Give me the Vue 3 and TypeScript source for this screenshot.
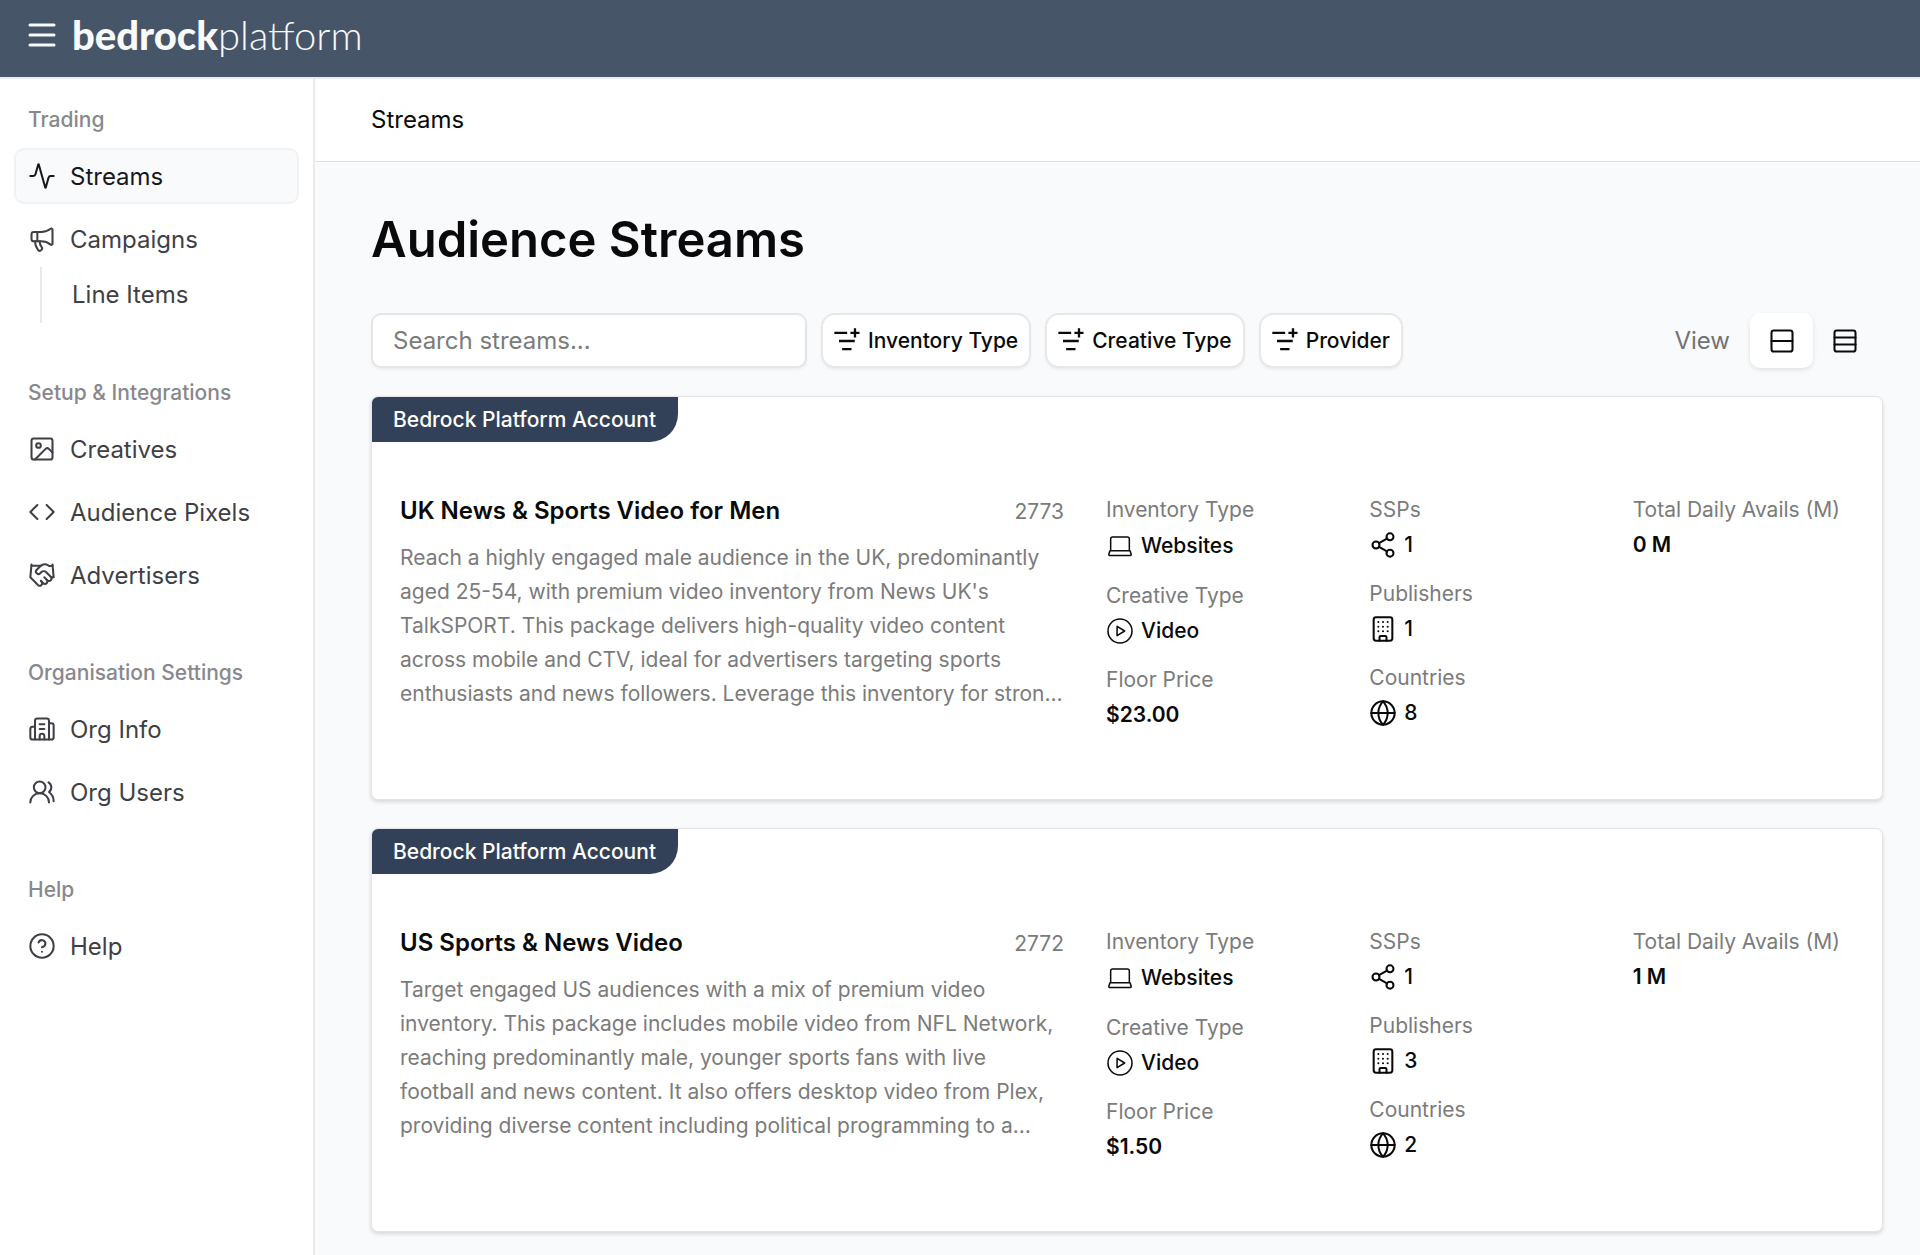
<script setup lang="ts">
import { ref } from 'vue'

interface NavItem {
  label: string
  icon: string
  active?: boolean
  children?: string[]
}
interface NavGroup {
  title: string
  items: NavItem[]
}
interface Metric {
  label: string
  value: string
  icon?: string
}
interface Stream {
  id: number
  account: string
  name: string
  description: string
  columns: Metric[][]
}

const icons: Record<string, string> = {
  activity:
    '<path d="M22 12h-2.48a2 2 0 0 0-1.93 1.46l-2.35 8.36a.25.25 0 0 1-.48 0L9.24 2.18a.25.25 0 0 0-.48 0l-2.35 8.36A2 2 0 0 1 4.49 12H2"/>',
  megaphone:
    '<path d="M11 6a13 13 0 0 0 8.4-2.8A1 1 0 0 1 21 4v12a1 1 0 0 1-1.6.8A13 13 0 0 0 11 14H5a2 2 0 0 1-2-2V8a2 2 0 0 1 2-2z"/><path d="M6 14a12 12 0 0 0 2.4 7.2 2 2 0 0 0 3.2-2.4A8 8 0 0 1 10 14"/><path d="M8 6v8"/>',
  image:
    '<rect width="18" height="18" x="3" y="3" rx="2"/><circle cx="9" cy="9" r="2"/><path d="m21 15-3.09-3.09a2 2 0 0 0-2.82 0L6 21"/>',
  code: '<path d="m16 18 6-6-6-6"/><path d="m8 6-6 6 6 6"/>',
  handshake:
    '<path d="m11 17 2 2a1 1 0 1 0 3-3"/><path d="m14 14 2.5 2.5a1 1 0 1 0 3-3l-3.88-3.88a3 3 0 0 0-4.24 0l-.88.88a1 1 0 1 1-3-3l2.81-2.81a5.79 5.79 0 0 1 7.06-.87l.47.28a2 2 0 0 0 1.42.25L21 4"/><path d="m21 3 1 11h-2"/><path d="M3 3 2 14l6.5 6.5a1 1 0 1 0 3-3"/><path d="M3 4h8"/>',
  office:
    '<path d="M10 12h4"/><path d="M10 8h4"/><path d="M14 21v-3a2 2 0 0 0-4 0v3"/><path d="M6 10H4a2 2 0 0 0-2 2v7a2 2 0 0 0 2 2h16a2 2 0 0 0 2-2V9a2 2 0 0 0-2-2h-2"/><path d="M6 21V5a2 2 0 0 1 2-2h8a2 2 0 0 1 2 2v16"/>',
  users:
    '<path d="M18 21a8 8 0 0 0-16 0"/><circle cx="10" cy="8" r="5"/><path d="M22 20c0-3.37-2-6.5-4-8a5 5 0 0 0-.45-8.3"/>',
  help: '<circle cx="12" cy="12" r="10"/><path d="M9.09 9a3 3 0 0 1 5.83 1c0 2-3 3-3 3"/><path d="M12 17h.01"/>',
  filter:
    '<path stroke-linecap="butt" d="M2 5h11M6 12h13.5M8.7 19h8M15.8 5h7.8M19.7 1v8"/>',
  rows2: '<rect width="18" height="18" x="3" y="3" rx="2"/><path d="M3 12h18"/>',
  rows3: '<rect width="18" height="18" x="3" y="3" rx="2"/><path d="M21 9H3"/><path d="M21 15H3"/>',
  laptop:
    '<path stroke-width="1.3" d="M4 16V6a1.8 1.8 0 0 1 1.8-1.8h12.4A1.8 1.8 0 0 1 20 6v10M3.4 16h17.2l1 3a1 1 0 0 1-1 1.2H3.4a1 1 0 0 1-1-1.2z"/>',
  play: '<g stroke-width="1.3"><circle cx="12" cy="12" r="10.3"/><path d="M9.5 8v8l6.5-4z"/></g>',
  share:
    '<circle cx="18" cy="5" r="3"/><circle cx="6" cy="12" r="3"/><circle cx="18" cy="19" r="3"/><path d="m8.59 13.51 6.83 3.98"/><path d="m15.41 6.51-6.82 3.98"/>',
  building:
    '<rect width="16" height="20" x="4" y="2" rx="2"/><path d="M9 22v-3a1 1 0 0 1 1-1h4a1 1 0 0 1 1 1v3"/><path d="M8 6h.01M12 6h.01M16 6h.01M8 10h.01M12 10h.01M16 10h.01M8 14h.01M12 14h.01M16 14h.01"/>',
  globe:
    '<circle cx="12" cy="12" r="10"/><path d="M12 2a14.5 14.5 0 0 0 0 20 14.5 14.5 0 0 0 0-20"/><path d="M2 12h20"/>',
}

const groups: NavGroup[] = [
  {
    title: 'Trading',
    items: [
      { label: 'Streams', icon: 'activity', active: true },
      { label: 'Campaigns', icon: 'megaphone', children: ['Line Items'] },
    ],
  },
  {
    title: 'Setup & Integrations',
    items: [
      { label: 'Creatives', icon: 'image' },
      { label: 'Audience Pixels', icon: 'code' },
      { label: 'Advertisers', icon: 'handshake' },
    ],
  },
  {
    title: 'Organisation Settings',
    items: [
      { label: 'Org Info', icon: 'office' },
      { label: 'Org Users', icon: 'users' },
    ],
  },
  { title: 'Help', items: [{ label: 'Help', icon: 'help' }] },
]

const filters = ['Inventory Type', 'Creative Type', 'Provider']

function metrics(price: string, ssps: string, publishers: string, countries: string, avails: string): Metric[][] {
  return [
    [
      { label: 'Inventory Type', value: 'Websites', icon: 'laptop' },
      { label: 'Creative Type', value: 'Video', icon: 'play' },
      { label: 'Floor Price', value: price },
    ],
    [
      { label: 'SSPs', value: ssps, icon: 'share' },
      { label: 'Publishers', value: publishers, icon: 'building' },
      { label: 'Countries', value: countries, icon: 'globe' },
    ],
    [{ label: 'Total Daily Avails (M)', value: avails }],
  ]
}

const streams: Stream[] = [
  {
    id: 2773,
    account: 'Bedrock Platform Account',
    name: 'UK News & Sports Video for Men',
    description:
      "Reach a highly engaged male audience in the UK, predominantly aged 25-54, with premium video inventory from News UK's TalkSPORT. This package delivers high-quality video content across mobile and CTV, ideal for advertisers targeting sports enthusiasts and news followers. Leverage this inventory for stron…",
    columns: metrics('$23.00', '1', '1', '8', '0 M'),
  },
  {
    id: 2772,
    account: 'Bedrock Platform Account',
    name: 'US Sports & News Video',
    description:
      'Target engaged US audiences with a mix of premium video inventory. This package includes mobile video from NFL Network, reaching predominantly male, younger sports fans with live football and news content. It also offers desktop video from Plex, providing diverse content including political programming to a…',
    columns: metrics('$1.50', '1', '3', '2', '1 M'),
  },
]

const search = ref('')
const view = ref<'cards' | 'rows'>('cards')
</script>

<template>
  <div class="app">
    <header class="topbar">
      <button class="menu" type="button" aria-label="Toggle menu">
        <svg viewBox="0 0 28 28" class="menu-icon"><path d="M2 4h24M2 14h24M2 24h24" /></svg>
      </button>
      <a class="brand" href="#"><b>bedrock</b><span>platform</span></a>
    </header>

    <div class="shell">
      <nav class="sidebar">
        <section v-for="group in groups" :key="group.title" class="group">
          <h2 class="group-title">{{ group.title }}</h2>
          <ul class="items">
            <li v-for="item in group.items" :key="item.label">
              <a href="#" class="item" :class="{ active: item.active }">
                <svg class="icon" viewBox="0 0 24 24" v-html="icons[item.icon]"></svg>
                {{ item.label }}
              </a>
              <ul v-if="item.children" class="subitems">
                <li v-for="child in item.children" :key="child">
                  <a href="#" class="subitem">{{ child }}</a>
                </li>
              </ul>
            </li>
          </ul>
        </section>
      </nav>

      <div class="page">
        <div class="crumbs">Streams</div>
        <main class="content">
          <h1>Audience Streams</h1>

          <div class="toolbar">
            <input v-model="search" class="search" type="text" placeholder="Search streams..." aria-label="Search streams" />
            <button v-for="f in filters" :key="f" class="filter" type="button">
              <svg class="icon filter-icon" viewBox="0 0 24 24" v-html="icons.filter"></svg>
              {{ f }}
            </button>
            <div class="view">
              <span class="view-label">View</span>
              <button type="button" class="toggle" :class="{ on: view === 'cards' }" aria-label="Card view" @click="view = 'cards'">
                <svg class="icon" viewBox="0 0 24 24" v-html="icons.rows2"></svg>
              </button>
              <button type="button" class="toggle" :class="{ on: view === 'rows' }" aria-label="Row view" @click="view = 'rows'">
                <svg class="icon" viewBox="0 0 24 24" v-html="icons.rows3"></svg>
              </button>
            </div>
          </div>

          <div class="cards">
            <article v-for="s in streams" :key="s.id" class="card">
              <div class="badge">{{ s.account }}</div>
              <div class="card-body">
                <div class="summary">
                  <div class="heading">
                    <h3>{{ s.name }}</h3>
                    <span class="stream-id">{{ s.id }}</span>
                  </div>
                  <p>{{ s.description }}</p>
                </div>
                <dl v-for="(column, c) in s.columns" :key="c" class="metrics">
                  <div v-for="m in column" :key="m.label">
                    <dt>{{ m.label }}</dt>
                    <dd :class="{ strong: !m.icon }">
                      <svg v-if="m.icon" class="icon" viewBox="0 0 24 24" v-html="icons[m.icon]"></svg>
                      {{ m.value }}
                    </dd>
                  </div>
                </dl>
              </div>
            </article>
          </div>
        </main>
      </div>
    </div>
  </div>
</template>

<style>
body {
  margin: 0;
  background: #f8fafc;
}
</style>

<style scoped>
.app {
  display: flex;
  flex-direction: column;
  min-height: 100vh;
  font-family: Inter, 'Liberation Sans', sans-serif;
  font-size: 21px;
  line-height: 35px;
  color: #0a0a0a;
}
h1, h2, h3, p, ul, dl, dd {
  margin: 0;
  padding: 0;
}
ul {
  list-style: none;
}
a {
  color: inherit;
  text-decoration: none;
}
button {
  border: 0;
  padding: 0;
  background: none;
  font: inherit;
  color: inherit;
  cursor: pointer;
}
.icon {
  flex: none;
  width: 28px;
  height: 28px;
  fill: none;
  stroke: currentColor;
  stroke-width: 1.75;
  stroke-linecap: round;
  stroke-linejoin: round;
}

.topbar {
  display: flex;
  align-items: center;
  gap: 16px;
  box-sizing: border-box;
  height: 79px;
  padding: 0 28px 8px;
  border-bottom: 2px solid #e9ebef;
  background: #475569;
  color: #f8fafc;
}
.menu {
  display: flex;
}
.menu-icon {
  width: 28px;
  height: 28px;
  fill: none;
  stroke: currentColor;
  stroke-width: 3;
  stroke-linecap: round;
}
.brand {
  font-family: Lato, Inter, sans-serif;
  font-size: 40px;
  line-height: 48px;
}
.brand b {
  font-weight: 900;
}
.brand span {
  font-weight: 300;
}

.shell {
  display: flex;
  flex: 1;
}
.sidebar {
  flex: none;
  box-sizing: border-box;
  width: 315px;
  padding: 13px 14px;
  border-right: 2px solid #e9eaec;
  background: #fff;
  display: flex;
  flex-direction: column;
  gap: 42px;
}
.group-title {
  padding: 0 14px;
  font-size: 21px;
  line-height: 56px;
  font-weight: 500;
  color: #88888c;
}
.items {
  display: flex;
  flex-direction: column;
  gap: 7px;
}
.item {
  display: flex;
  align-items: center;
  gap: 14px;
  box-sizing: border-box;
  height: 56px;
  padding: 0 12px;
  border: 2px solid transparent;
  border-radius: 10px;
  font-size: 24px;
  color: #3f3f46;
}
.item.active {
  border-color: #f1f2f3;
  background: #f8fafc;
  color: #18181b;
}
.subitems {
  margin-left: 26px;
  border-left: 2px solid #e8e8ee;
}
.subitem {
  display: block;
  padding-left: 30px;
  font-size: 24px;
  line-height: 56px;
  color: #3f3f46;
}

.page {
  flex: 1;
  min-width: 0;
  background: #f8fafc;
}
.crumbs {
  padding: 0 56px;
  border-bottom: 1px solid #dfe1e5;
  background: #fff;
  font-size: 24px;
  line-height: 82px;
}
.content {
  padding: 43px 37px 24px 56px;
}
h1 {
  font-size: 49px;
  line-height: 70px;
  font-weight: 600;
}
.toolbar {
  display: flex;
  align-items: center;
  gap: 14px;
  margin: 38px 0 28px;
}
.search {
  box-sizing: border-box;
  width: 436px;
  height: 55px;
  padding: 0 20px;
  border: 2px solid #e5e5e5;
  border-radius: 10px;
  background: #fff;
  font: inherit;
  font-size: 24px;
  color: inherit;
  box-shadow: 0 2px 3px rgb(0 0 0 / 5%);
}
.search::placeholder {
  color: #7b7b7b;
  opacity: 1;
}
.filter {
  display: flex;
  align-items: center;
  gap: 8px;
  box-sizing: border-box;
  height: 55px;
  padding: 0 11px 0 9px;
  border: 2px solid #e8e8e8;
  border-radius: 14px;
  background: #fff;
  font-weight: 500;
  white-space: nowrap;
  box-shadow: 0 2px 3px rgb(0 0 0 / 5%);
}
.filter-icon {
  stroke-width: 2;
}
.view {
  display: flex;
  align-items: center;
  margin-left: auto;
  padding-right: 7px;
}
.view-label {
  margin-right: 20px;
  font-size: 24px;
  color: #737373;
}
.toggle {
  display: flex;
  align-items: center;
  justify-content: center;
  width: 63px;
  height: 55px;
  border-radius: 10px;
}
.toggle.on {
  background: #fff;
  box-shadow: 0 2px 5px rgb(0 0 0 / 10%);
}

.cards {
  display: flex;
  flex-direction: column;
  gap: 28px;
}
.card {
  overflow: hidden;
  border: 1px solid #e5e5e5;
  border-radius: 7px;
  background: #fff;
  box-shadow: 0 2px 4px rgb(0 0 0 / 14%);
}
.badge {
  width: fit-content;
  padding: 0 22px 0 21px;
  border-bottom-right-radius: 28px;
  background: #334158;
  color: #fff;
  font-weight: 500;
  line-height: 45px;
}
.card-body {
  display: grid;
  grid-template-columns: 3fr 1fr 1fr 1fr;
  gap: 42px;
  padding: 50px 28px 67px;
}
.heading {
  display: flex;
  align-items: center;
  justify-content: space-between;
  margin-bottom: 11px;
}
h3 {
  font-size: 24px;
  line-height: 38px;
  font-weight: 600;
}
.stream-id {
  color: #7b7b7b;
}
.summary p {
  line-height: 34px;
  color: #7b7b7b;
}
.metrics {
  display: flex;
  flex-direction: column;
  gap: 14px;
  white-space: nowrap;
}
dt {
  color: #7b7b7b;
}
dd {
  display: flex;
  align-items: center;
  gap: 7px;
  font-weight: 500;
}
.metrics:first-of-type > div:first-child dd {
  line-height: 37px;
}
dd.strong {
  font-weight: 600;
}
</style>
